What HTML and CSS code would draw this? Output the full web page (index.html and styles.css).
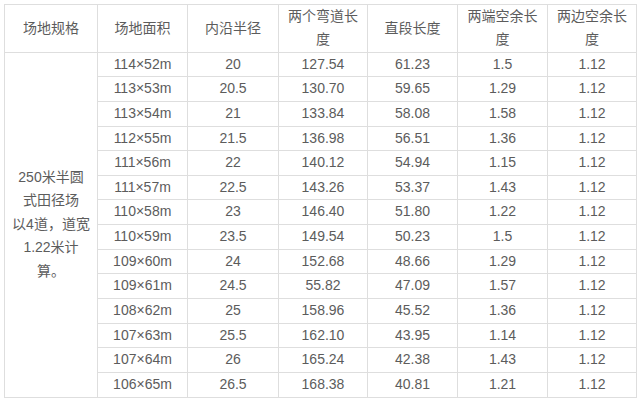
FILE: index.html
```html
<!DOCTYPE html>
<html lang="zh">
<head>
<meta charset="utf-8">
<link rel="stylesheet" href="styles.css">
</head>
<body>
<div class="page">
<table class="spec">
<colgroup>
<col class="c1"><col class="c2"><col class="c3"><col class="c4"><col class="c5"><col class="c6"><col class="c7">
</colgroup>
<thead>
<tr><th>场地规格</th><th>场地面积</th><th>内沿半径</th><th>两个弯道长度</th><th>直段长度</th><th>两端空余长度</th><th>两边空余长度</th></tr>
</thead>
<tbody>
<tr><td rowspan="14" class="side"><div class="note">250米半圆<br>式田径场<br>以4道，道宽<br>1.22米计<br>算。</div></td><td>114×52m</td><td>20</td><td>127.54</td><td>61.23</td><td>1.5</td><td>1.12</td></tr>
<tr><td>113×53m</td><td>20.5</td><td>130.70</td><td>59.65</td><td>1.29</td><td>1.12</td></tr>
<tr><td>113×54m</td><td>21</td><td>133.84</td><td>58.08</td><td>1.58</td><td>1.12</td></tr>
<tr><td>112×55m</td><td>21.5</td><td>136.98</td><td>56.51</td><td>1.36</td><td>1.12</td></tr>
<tr><td>111×56m</td><td>22</td><td>140.12</td><td>54.94</td><td>1.15</td><td>1.12</td></tr>
<tr><td>111×57m</td><td>22.5</td><td>143.26</td><td>53.37</td><td>1.43</td><td>1.12</td></tr>
<tr><td>110×58m</td><td>23</td><td>146.40</td><td>51.80</td><td>1.22</td><td>1.12</td></tr>
<tr><td>110×59m</td><td>23.5</td><td>149.54</td><td>50.23</td><td>1.5</td><td>1.12</td></tr>
<tr><td>109×60m</td><td>24</td><td>152.68</td><td>48.66</td><td>1.29</td><td>1.12</td></tr>
<tr><td>109×61m</td><td>24.5</td><td>55.82</td><td>47.09</td><td>1.57</td><td>1.12</td></tr>
<tr><td>108×62m</td><td>25</td><td>158.96</td><td>45.52</td><td>1.36</td><td>1.12</td></tr>
<tr><td>107×63m</td><td>25.5</td><td>162.10</td><td>43.95</td><td>1.14</td><td>1.12</td></tr>
<tr><td>107×64m</td><td>26</td><td>165.24</td><td>42.38</td><td>1.43</td><td>1.12</td></tr>
<tr><td>106×65m</td><td>26.5</td><td>168.38</td><td>40.81</td><td>1.21</td><td>1.12</td></tr>
</tbody>
</table>
</div>
</body>
</html>
```

FILE: styles.css
```css
html, body {
  margin: 0;
  padding: 0;
  background: #ffffff;
}
.page {
  padding: 4px 0 0 4px;
}
.spec {
  border-collapse: collapse;
  table-layout: fixed;
  width: 632px;
  font-family: "Liberation Sans", "Noto Sans CJK SC", sans-serif;
  font-size: 14px;
  color: #5c5c5c;
}
.c1 { width: 93px; }
.c2 { width: 90px; }
.c3 { width: 91px; }
.c4 { width: 89px; }
.c5 { width: 90px; }
.c6 { width: 90px; }
.c7 { width: 89px; }
.spec th,
.spec td {
  border: 1px solid #dedede;
  padding: 0 5px;
  text-align: center;
  vertical-align: middle;
  font-weight: normal;
}
.spec th {
  line-height: 23.3px;
}
.spec td {
  line-height: 23.64px;
}
.spec td.side {
  padding: 0;
}
.note {
  white-space: nowrap;
  line-height: 23.5px;
}
```
